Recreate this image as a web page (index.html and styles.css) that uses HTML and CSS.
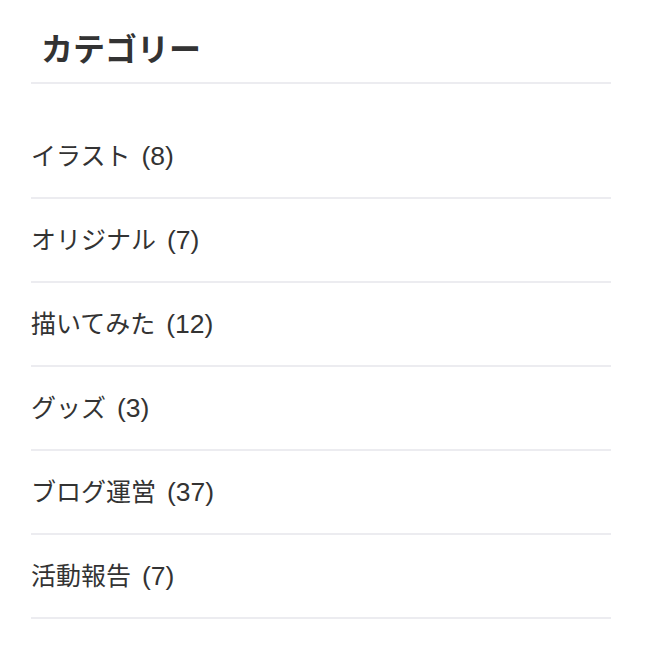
FILE: index.html
```html
<!DOCTYPE html>
<html lang="ja">
<head>
    <meta charset="UTF-8">
    <meta name="viewport" content="width=device-width, initial-scale=1.0">
    <title>カテゴリー</title>
    <link rel="stylesheet" href="styles.css">
</head>
<body>
    <div class="widget">
        <h2 class="widget-title">カテゴリー</h2>
        <ul class="category-list">
            <li><a href="#">イラスト</a><span class="count">(8)</span></li>
            <li><a href="#">オリジナル</a><span class="count">(7)</span></li>
            <li><a href="#">描いてみた</a><span class="count">(12)</span></li>
            <li><a href="#">グッズ</a><span class="count">(3)</span></li>
            <li><a href="#">ブログ運営</a><span class="count">(37)</span></li>
            <li><a href="#">活動報告</a><span class="count">(7)</span></li>
        </ul>
    </div>
</body>
</html>
```

FILE: styles.css
```css
body {
    font-family: "Liberation Sans", "Noto Sans CJK JP", sans-serif;
    background-color: #fff;
    color: #333;
    margin: 0;
    padding: 0;
}

.widget {
    width: 580px;
    margin-left: 31px;
}

.widget-title {
    font-family: "Noto Sans CJK JP", sans-serif;
    font-size: 32px;
    font-weight: bold;
    line-height: 1;
    margin: 0;
    padding: 31px 0 19px 10px;
    border-bottom: 2px solid #ececf0;
}

.category-list {
    list-style: none;
    margin: 31px 0 0;
    padding: 0;
}

.category-list li {
    font-size: 25px;
    line-height: 1;
    height: 82px;
    display: flex;
    align-items: center;
    border-bottom: 2px solid #ececf0;
}

.category-list a {
    color: #333;
    text-decoration: none;
}

.count {
    font-size: 26.5px;
    margin-left: 11px;
}
```
